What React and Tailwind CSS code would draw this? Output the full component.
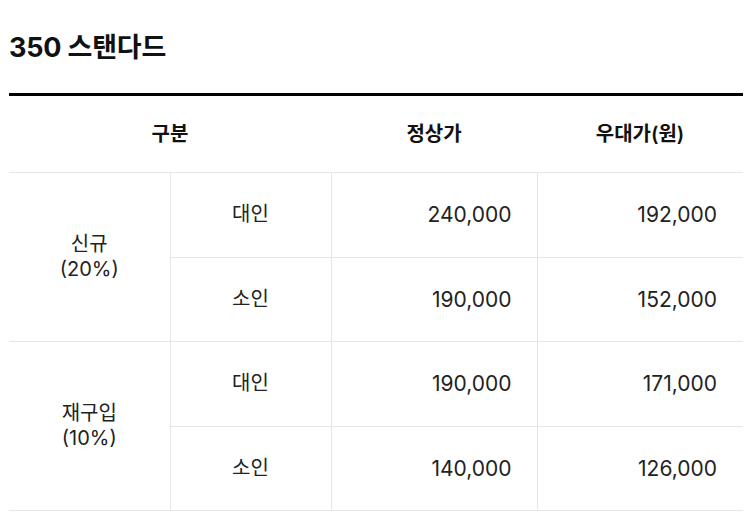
import React from "react";

const rows = [
  { group: ["신규", "(20%)"], items: [["대인", "240,000", "192,000"], ["소인", "190,000", "152,000"]] },
  { group: ["재구입", "(10%)"], items: [["대인", "190,000", "171,000"], ["소인", "140,000", "126,000"]] },
];

export default function App() {
  return (
    <div
      className="w-[748px] h-[519px] bg-white overflow-hidden text-[#222]"
      style={{ fontFamily: "Inter, 'Noto Sans CJK KR', sans-serif" }}
    >
      <div className="pl-[9px] pr-[5px]">
        <h1 className="pt-[30px] h-[93px] text-[27px] leading-[36px] font-bold text-[#111] tracking-[-0.2px]">
          350 스탠다드
        </h1>
        <table className="w-[734px] border-collapse table-fixed border-t-[3px] border-black">
          <colgroup>
            <col className="w-[161px]" />
            <col className="w-[161px]" />
            <col className="w-[206px]" />
            <col className="w-[206px]" />
          </colgroup>
          <thead>
            <tr className="h-[78px]">
              <th colSpan={2} className="text-[20px] font-semibold text-center text-[#111] border-b border-[#e6e6e6]">
                구분
              </th>
              <th className="text-[20px] font-semibold text-center text-[#111] border-b border-[#e6e6e6]">정상가</th>
              <th className="text-[20px] font-semibold text-center text-[#111] border-b border-[#e6e6e6]">우대가(원)</th>
            </tr>
          </thead>
          <tbody>
            {rows.map((g, gi) =>
              g.items.map((it, ii) => (
                <tr key={gi + "-" + ii} className={ii === 0 ? "h-[85px]" : "h-[84px]"}>
                  {ii === 0 && (
                    <td
                      rowSpan={2}
                      className="text-[20px] leading-[25px] text-center border-b border-r border-[#e6e6e6] font-normal"
                    >
                      <div>{g.group[0]}</div>
                      <div>{g.group[1]}</div>
                    </td>
                  )}
                  <td className="text-[20px] text-center border border-[#e6e6e6] border-l-0 pb-[2px]">{it[0]}</td>
                  <td className="text-[21px] text-right pr-[25px] border border-[#e6e6e6]">{it[1]}</td>
                  <td className="text-[21px] text-right pr-[26px] border-b border-[#e6e6e6]">{it[2]}</td>
                </tr>
              ))
            )}
          </tbody>
        </table>
      </div>
    </div>
  );
}
